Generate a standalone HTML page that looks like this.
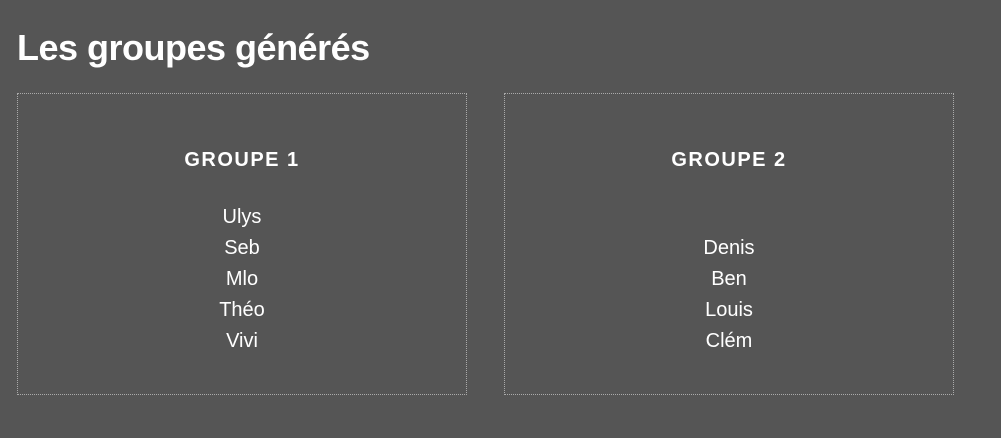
<!DOCTYPE html>
<html><head><meta charset="utf-8"><style>
html,body{margin:0;padding:0;background:#555;width:1001px;height:438px;overflow:hidden;font-family:"Liberation Sans",Arial,sans-serif;color:#fff}
h1{position:absolute;left:17px;top:26px;margin:0;font-size:36px;font-weight:bold;line-height:44px;letter-spacing:-0.5px}
.box{position:absolute;top:93px;width:448px;height:300px;border:1px dotted #aaa}
.t{position:absolute;left:0;width:100%;text-align:center;font-size:20px;font-weight:bold;letter-spacing:1.5px;line-height:24px}
.n{position:absolute;left:0;width:100%;text-align:center;font-size:20px;line-height:31px}
</style></head><body>
<h1>Les groupes générés</h1>
<div class="box" style="left:17px"><div class="t" style="top:54px">GROUPE 1</div>
<div class="n" style="top:108px">Ulys<br>Seb<br>Mlo<br>Théo<br>Vivi</div></div>
<div class="box" style="left:504px"><div class="t" style="top:54px">GROUPE 2</div>
<div class="n" style="top:139px">Denis<br>Ben<br>Louis<br>Clém</div></div>
</body></html>
